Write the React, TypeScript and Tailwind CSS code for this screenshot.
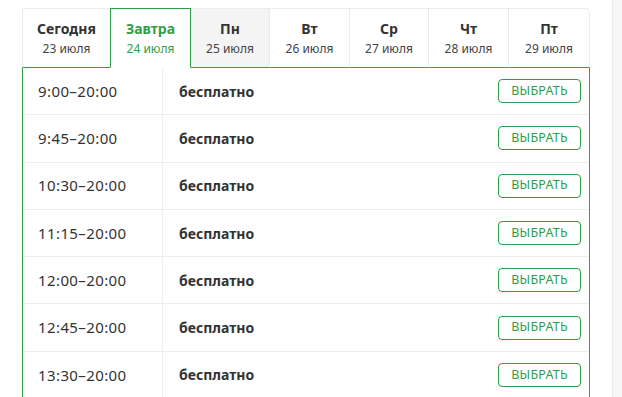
import React from "react";

type Day = { title: string; date: string; width: string };

const days: Day[] = [
  { title: "Сегодня", date: "23 июля", width: "w-[88px]" },
  { title: "Завтра", date: "24 июля", width: "w-[81px]" },
  { title: "Пн", date: "25 июля", width: "w-[79px]" },
  { title: "Вт", date: "26 июля", width: "w-[80px]" },
  { title: "Ср", date: "27 июля", width: "w-[79px]" },
  { title: "Чт", date: "28 июля", width: "w-[80px]" },
  { title: "Пт", date: "29 июля", width: "w-[81px]" },
];

const slots = [
  "9:00–20:00",
  "9:45–20:00",
  "10:30–20:00",
  "11:15–20:00",
  "12:00–20:00",
  "12:45–20:00",
  "13:30–20:00",
];

const ACTIVE = 1;

export default function App() {
  return (
    <div
      className="flex h-[397px] w-[622px] overflow-hidden bg-white text-[#333]"
      style={{ fontFamily: '"Noto Sans", "Open Sans", sans-serif' }}
    >
      <div className="flex-1 pl-[22px] pt-[8px]">
        <div className="w-[568px]">
          {/* Day tabs */}
          <div className="flex">
            {days.map((d, i) => {
              const active = i === ACTIVE;
              const beforeActive = i === ACTIVE - 1;
              return (
                <div
                  key={d.title}
                  className={[
                    "flex h-[60px] flex-col items-center justify-center border-t",
                    d.width,
                    active
                      ? "border-x border-[#2f9e48] border-b border-b-white text-[#2f9e48]"
                      : "border-t-[#ebebeb] border-b border-b-[#2f9e48]",
                    !active && !beforeActive ? "border-r border-r-[#ebebeb]" : "",
                    i === 0 ? "border-l border-l-[#ebebeb]" : "",
                    i === 2 ? "bg-[#f4f4f4]" : "bg-white",
                    i === days.length - 1 ? "rounded-tr-[5px]" : "",
                  ].join(" ")}
                >
                  <span className="text-[14px] font-bold leading-[18px]">{d.title}</span>
                  <span
                    className={[
                      "mt-[3px] text-[12px] leading-[16px]",
                      active ? "text-[#2f9e48]" : "text-[#444]",
                    ].join(" ")}
                  >
                    {d.date}
                  </span>
                </div>
              );
            })}
          </div>

          {/* Slots */}
          <div className="border-x border-[#2f9e48]">
            {slots.map((s) => (
              <div key={s} className="flex h-[47.3px] items-center border-b border-[#eeeeee]">
                <div className="flex h-full w-[140px] items-center border-r border-[#eeeeee] pl-[15px] text-[15px] tracking-[0.4px]">
                  {s}
                </div>
                <div className="flex flex-1 items-center justify-between pl-[16px] pr-[8px]">
                  <span className="text-[14px] font-bold">бесплатно</span>
                  <button className="h-[24px] w-[83px] rounded-[4px] border border-[#2f9e48] text-[12.5px] tracking-[0.2px] text-[#2f9e48]">
                    ВЫБРАТЬ
                  </button>
                </div>
              </div>
            ))}
          </div>
        </div>
      </div>
      <div className="h-full w-[10px] border-l border-[#ececec] bg-[#f7f7f7]" />
    </div>
  );
}
